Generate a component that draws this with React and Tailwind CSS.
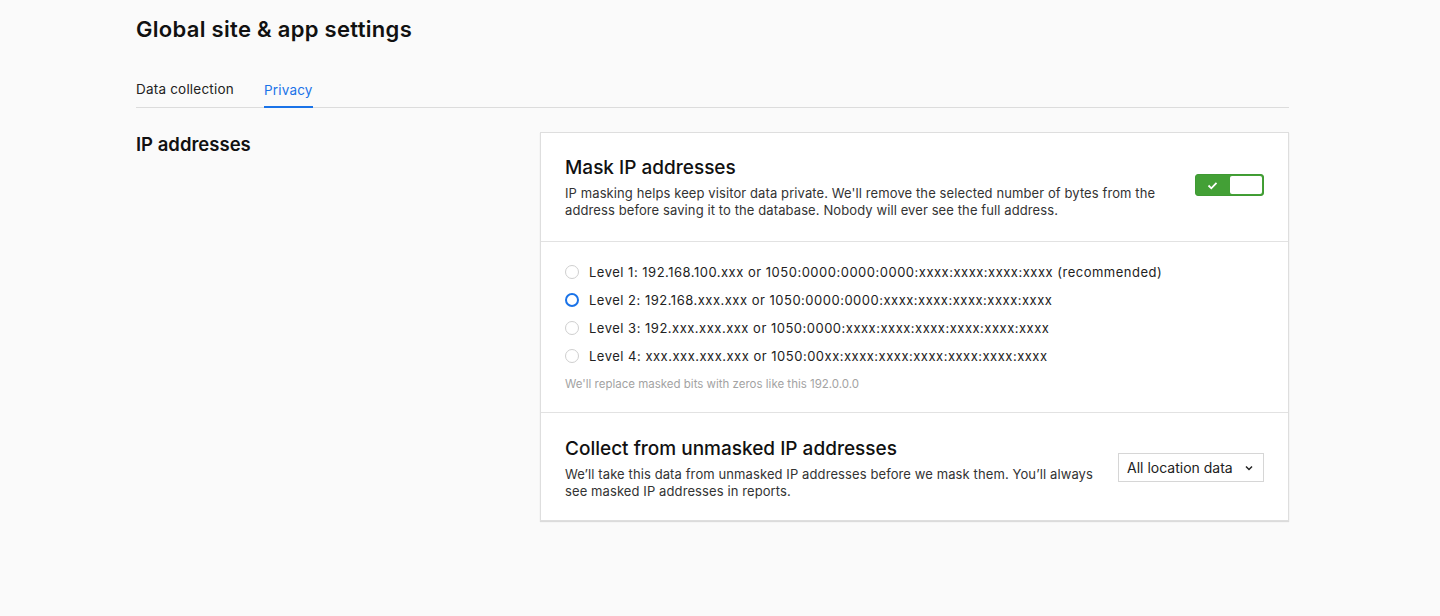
import React, { useState } from 'react';

const levels = [
  'Level 1: 192.168.100.xxx or 1050:0000:0000:0000:xxxx:xxxx:xxxx:xxxx (recommended)',
  'Level 2: 192.168.xxx.xxx or 1050:0000:0000:xxxx:xxxx:xxxx:xxxx:xxxx',
  'Level 3: 192.xxx.xxx.xxx or 1050:0000:xxxx:xxxx:xxxx:xxxx:xxxx:xxxx',
  'Level 4: xxx.xxx.xxx.xxx or 1050:00xx:xxxx:xxxx:xxxx:xxxx:xxxx:xxxx',
];

function Radio({ checked }) {
  return checked ? (
    <span className="w-[14px] h-[14px] rounded-full border-[2.5px] border-[#1a73e8] bg-white shrink-0" />
  ) : (
    <span className="w-[14px] h-[14px] rounded-full border border-[#cfcfcf] bg-white shrink-0" />
  );
}

export default function App() {
  const [level, setLevel] = useState(1);

  return (
    <div className="min-h-[616px] bg-[#fafafa] text-[#1d1d1f]" style={{ fontFamily: 'Inter, "Noto Sans", sans-serif' }}>
      <div className="ml-[136px] w-[1153px] pt-[15px]">
        <h1 className="text-[22px] leading-[28px] font-semibold tracking-[0.3px] text-[#111]">Global site &amp; app settings</h1>

        {/* Tabs */}
        <div className="mt-[36px] flex gap-[30px] border-b border-[#dcdcdc] text-[13.5px]">
          <button className="pb-[8px] text-[#222] tracking-[0.2px]">Data collection</button>
          <button className="pb-[6px] text-[#1a73e8] border-b-2 border-[#1a73e8] tracking-[0.2px] -mb-px">Privacy</button>
        </div>

        <div className="mt-[24px] flex">
          <div className="w-[404px] pt-[1px]">
            <h2 className="text-[18.5px] leading-[22px] font-semibold text-[#111]">IP addresses</h2>
          </div>

          <div className="w-[749px] bg-white border border-[#dedede] shadow-[0_1px_1px_rgba(0,0,0,0.12)]">
            {/* Mask IP addresses */}
            <div className="px-[24px] pt-[23px] pb-[22px] flex items-center justify-between border-b border-[#e2e2e2]">
              <div className="w-[610px]">
                <h3 className="text-[19px] leading-[24px] font-medium text-[#111]">Mask IP addresses</h3>
                <p className="mt-[5px] text-[13px] leading-[17px] tracking-[0.1px] text-[#333]">
                  IP masking helps keep visitor data private. We'll remove the selected number of bytes from the address before saving it to the database. Nobody will ever see the full address.
                </p>
              </div>
              <div className="w-[69px] h-[22px] rounded-[3px] border border-[#3f9a33] bg-[#43a036] flex overflow-hidden mt-[-5px]">
                <div className="flex-1 flex items-center justify-center">
                  <svg width="11" height="9" viewBox="0 0 11 9" fill="none">
                    <path d="M1.5 4.5l2.8 2.8L9.5 1.8" stroke="white" strokeWidth="1.8" />
                  </svg>
                </div>
                <div className="w-[32px] bg-white rounded-[2px] m-[1px]" />
              </div>
            </div>

            {/* Levels */}
            <div className="px-[24px] pt-[20px] pb-[20px] border-b border-[#e2e2e2]">
              <div className="flex flex-col gap-[8px]">
                {levels.map((l, i) => (
                  <label key={i} className="h-[20px] flex items-center gap-[10px] cursor-pointer" onClick={() => setLevel(i)}>
                    <Radio checked={level === i} />
                    <span className="text-[13px] tracking-[0.5px] text-[#222]">{l}</span>
                  </label>
                ))}
              </div>
              <p className="mt-[10px] text-[11.5px] leading-[16px] text-[#a3a3a3]">We'll replace masked bits with zeros like this 192.0.0.0</p>
            </div>

            {/* Collect */}
            <div className="px-[24px] pt-[24px] pb-[20px] flex items-center justify-between">
              <div className="w-[540px]">
                <h3 className="text-[19px] leading-[24px] font-medium text-[#111]">Collect from unmasked IP addresses</h3>
                <p className="mt-[5px] text-[13px] leading-[17px] tracking-[0.1px] text-[#333]">
                  We’ll take this data from unmasked IP addresses before we mask them. You’ll always see masked IP addresses in reports.
                </p>
              </div>
              <button className="h-[29px] w-[146px] pl-[8px] pr-[10px] border border-[#d6d6d6] bg-white flex items-center justify-between text-[14px] text-[#222] mt-[-2px]">
                <span>All location data</span>
                <svg width="8" height="6" viewBox="0 0 8 6" fill="none">
                  <path d="M1 1.5l3 3 3-3" stroke="#222" strokeWidth="1.5" />
                </svg>
              </button>
            </div>
          </div>
        </div>
      </div>
    </div>
  );
}
